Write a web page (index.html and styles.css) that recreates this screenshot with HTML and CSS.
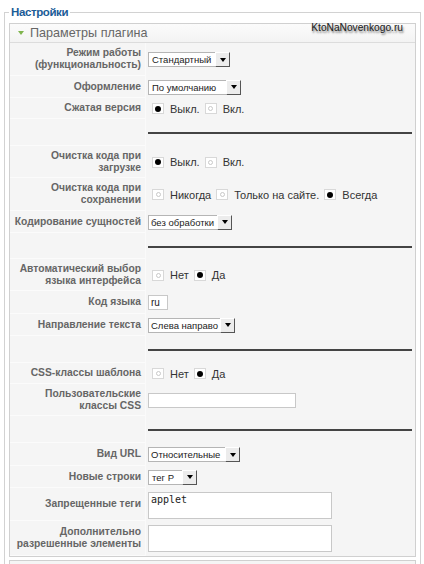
FILE: index.html
```html
<!DOCTYPE html>
<html lang="ru">
<head>
<meta charset="utf-8">
<title>Настройки</title>
<link rel="stylesheet" href="styles.css">
</head>
<body>
<fieldset class="settings">
  <legend class="settings-title">Настройки</legend>
  <div class="watermark">KtoNaNovenkogo.ru</div>
  <div class="panel">
    <div class="panel-head"><span class="arrow"></span>Параметры плагина</div>
    <div class="rows">
      <div class="row h33"><div class="lbl">Режим работы<br>(функциональность)</div><div class="val"><span class="sel w81">Стандартный<span class="btn"></span></span></div></div>
      <div class="row h22"><div class="lbl">Оформление</div><div class="val"><span class="sel w92">По умолчанию<span class="btn"></span></span></div></div>
      <div class="row h21"><div class="lbl">Сжатая версия</div><div class="val"><span class="radio on"></span><span class="rt">Выкл.</span><span class="radio"></span><span class="rt">Вкл.</span></div></div>
      <div class="row h27"><div class="lbl"></div><div class="val"><span class="rule"></span></div></div>
      <div class="row h32"><div class="lbl">Очистка кода при<br>загрузке</div><div class="val"><span class="radio on"></span><span class="rt">Выкл.</span><span class="radio"></span><span class="rt">Вкл.</span></div></div>
      <div class="row h33"><div class="lbl">Очистка кода при<br>сохранении</div><div class="val"><span class="radio"></span><span class="rt">Никогда</span><span class="radio"></span><span class="rt">Только на сайте.</span><span class="radio on"></span><span class="rt">Всегда</span></div></div>
      <div class="row h22"><div class="lbl">Кодирование сущностей</div><div class="val"><span class="sel w83 tight">без обработки<span class="btn"></span></span></div></div>
      <div class="row h26"><div class="lbl"></div><div class="val"><span class="rule"></span></div></div>
      <div class="row h32"><div class="lbl">Автоматический выбор<br>языка интерфейса</div><div class="val"><span class="radio"></span><span class="rt">Нет</span><span class="radio on"></span><span class="rt">Да</span></div></div>
      <div class="row h23"><div class="lbl">Код языка</div><div class="val"><span class="field w20">ru</span></div></div>
      <div class="row h22"><div class="lbl">Направление текста</div><div class="val"><span class="sel w86 tight">Слева направо<span class="btn"></span></span></div></div>
      <div class="row h27"><div class="lbl"></div><div class="val"><span class="rule"></span></div></div>
      <div class="row h21"><div class="lbl">CSS-классы шаблона</div><div class="val"><span class="radio"></span><span class="rt">Нет</span><span class="radio on"></span><span class="rt">Да</span></div></div>
      <div class="row h32"><div class="lbl">Пользовательские<br>классы CSS</div><div class="val"><span class="field w148"></span></div></div>
      <div class="row h27"><div class="lbl"></div><div class="val"><span class="rule"></span></div></div>
      <div class="row h23"><div class="lbl">Вид URL</div><div class="val"><span class="sel w91 tight">Относительные<span class="btn"></span></span></div></div>
      <div class="row h22"><div class="lbl">Новые строки</div><div class="val"><span class="sel w48">тег P<span class="btn"></span></span></div></div>
      <div class="row h33 top"><div class="lbl">Запрещенные теги</div><div class="val"><span class="area">applet</span></div></div>
      <div class="row h35"><div class="lbl">Дополнительно<br>разрешенные элементы</div><div class="val"><span class="area"></span></div></div>
    </div>
  </div>
  <div class="panel next"></div>
</fieldset>
</body>
</html>
```
FILE: styles.css
```css
html, body {
  margin: 0;
  padding: 0;
  background: #fff;
  overflow: hidden;
}
body {
  width: 424px;
  height: 564px;
  font-family: "Liberation Sans", Arial, sans-serif;
  font-size: 11px;
  color: #333;
}
.settings {
  position: relative;
  margin: 5px 3px 0 4px;
  padding: 4px 4px 0 4px;
  border: 1px solid #d2d2d2;
  min-width: 0;
}
.settings-title {
  margin-left: 0;
  padding: 0 2px;
  font-size: 11.5px;
  line-height: 14px;
  font-weight: bold;
  letter-spacing: -0.4px;
  color: #1b5c97;
}
.watermark {
  position: absolute;
  top: 2px;
  right: 17px;
  font-size: 10.2px;
  line-height: 14px;
  color: #1a1a1a;
  text-shadow: 1px 2px 2px #777;
}
.panel {
  border: 1px solid #d0d0d0;
  background: #f5f5f5;
}
.panel.next {
  margin-top: 3px;
  height: 20px;
  border-bottom: none;
}
.panel-head {
  display: flex;
  align-items: center;
  height: 18px;
  padding-left: 8px;
  background: linear-gradient(#fbfbfb, #f3f3f3);
  border-bottom: 1px solid #dcdcdc;
  font-size: 12.6px;
  color: #666;
}
.arrow {
  width: 0;
  height: 0;
  margin-right: 6px;
  border-left: 3px solid transparent;
  border-right: 3px solid transparent;
  border-top: 4px solid #7fb54e;
}
.row {
  display: flex;
}
.h21 { height: 21px; }
.h22 { height: 22px; }
.h23 { height: 23px; }
.h26 { height: 26px; }
.h27 { height: 27px; }
.h32 { height: 32px; }
.h33 { height: 33px; }
.h35 { height: 35px; }
.lbl {
  box-sizing: border-box;
  width: 136px;
  flex: none;
  display: flex;
  align-items: center;
  justify-content: flex-end;
  padding-right: 4px;
  text-align: right;
  white-space: nowrap;
  font-size: 10.3px;
  font-weight: bold;
  color: #666;
  line-height: 12px;
  border-bottom: 1px solid #fbfbfb;
  border-right: 1px solid #fafafa;
}
.val {
  flex: 1;
  display: flex;
  align-items: center;
  padding: 0 3px 0 2px;
}
.rule {
  flex: 1;
  height: 2px;
  background: #444;
  margin-top: 1px;
}
.sel {
  position: relative;
  box-sizing: border-box;
  height: 15px;
  display: flex;
  align-items: center;
  padding-left: 3px;
  background: #fff;
  border: 1px solid #b5b5b5;
  border-right: none;
  font-size: 9.5px;
  color: #222;
}
.sel.tight { padding-left: 2px; }
.w81 { width: 82px; }
.w92 { width: 93px; }
.w83 { width: 84px; }
.w86 { width: 87px; }
.w91 { width: 92px; }
.w48 { width: 49px; }
.btn {
  position: absolute;
  right: 0;
  top: -1px;
  box-sizing: border-box;
  width: 15px;
  height: 15px;
  background: #ececec;
  border: 1px solid;
  border-color: #fff #555 #555 #fff;
  display: flex;
  align-items: center;
  justify-content: center;
}
.btn::after {
  content: "";
  width: 0;
  height: 0;
  border-left: 3px solid transparent;
  border-right: 3px solid transparent;
  border-top: 4px solid #000;
}
.radio {
  position: relative;
  box-sizing: border-box;
  width: 12px;
  height: 11px;
  margin-left: 4px;
  background: #fff;
  border: 1px solid #d8d8d8;
  display: flex;
  align-items: center;
  justify-content: center;
}
.radio::after {
  content: "";
  width: 5px;
  height: 5px;
  border-radius: 50%;
  border: 1px solid #c8c8c8;
  box-sizing: border-box;
}
.radio.on::after {
  width: 6px;
  height: 6px;
  border: none;
  background: #000;
}
.rt {
  margin-left: 6px;
  margin-right: 1px;
  font-size: 11px;
  color: #333;
}
.field {
  box-sizing: border-box;
  height: 15px;
  padding-left: 2px;
  background: #fff;
  border: 1px solid #c8c8c8;
  font-size: 10px;
  line-height: 13px;
  color: #222;
}
.w20 { width: 20px; }
.w148 { width: 148px; }
.area {
  box-sizing: border-box;
  width: 184px;
  height: 27px;
  padding: 1px 2px;
  background: #fff;
  border: 1px solid #c8c8c8;
  font-family: "DejaVu Sans Mono", "Liberation Mono", monospace;
  font-size: 10px;
  line-height: 12px;
  color: #222;
}
.row.top .val { align-items: flex-start; padding-top: 4px; }
```
